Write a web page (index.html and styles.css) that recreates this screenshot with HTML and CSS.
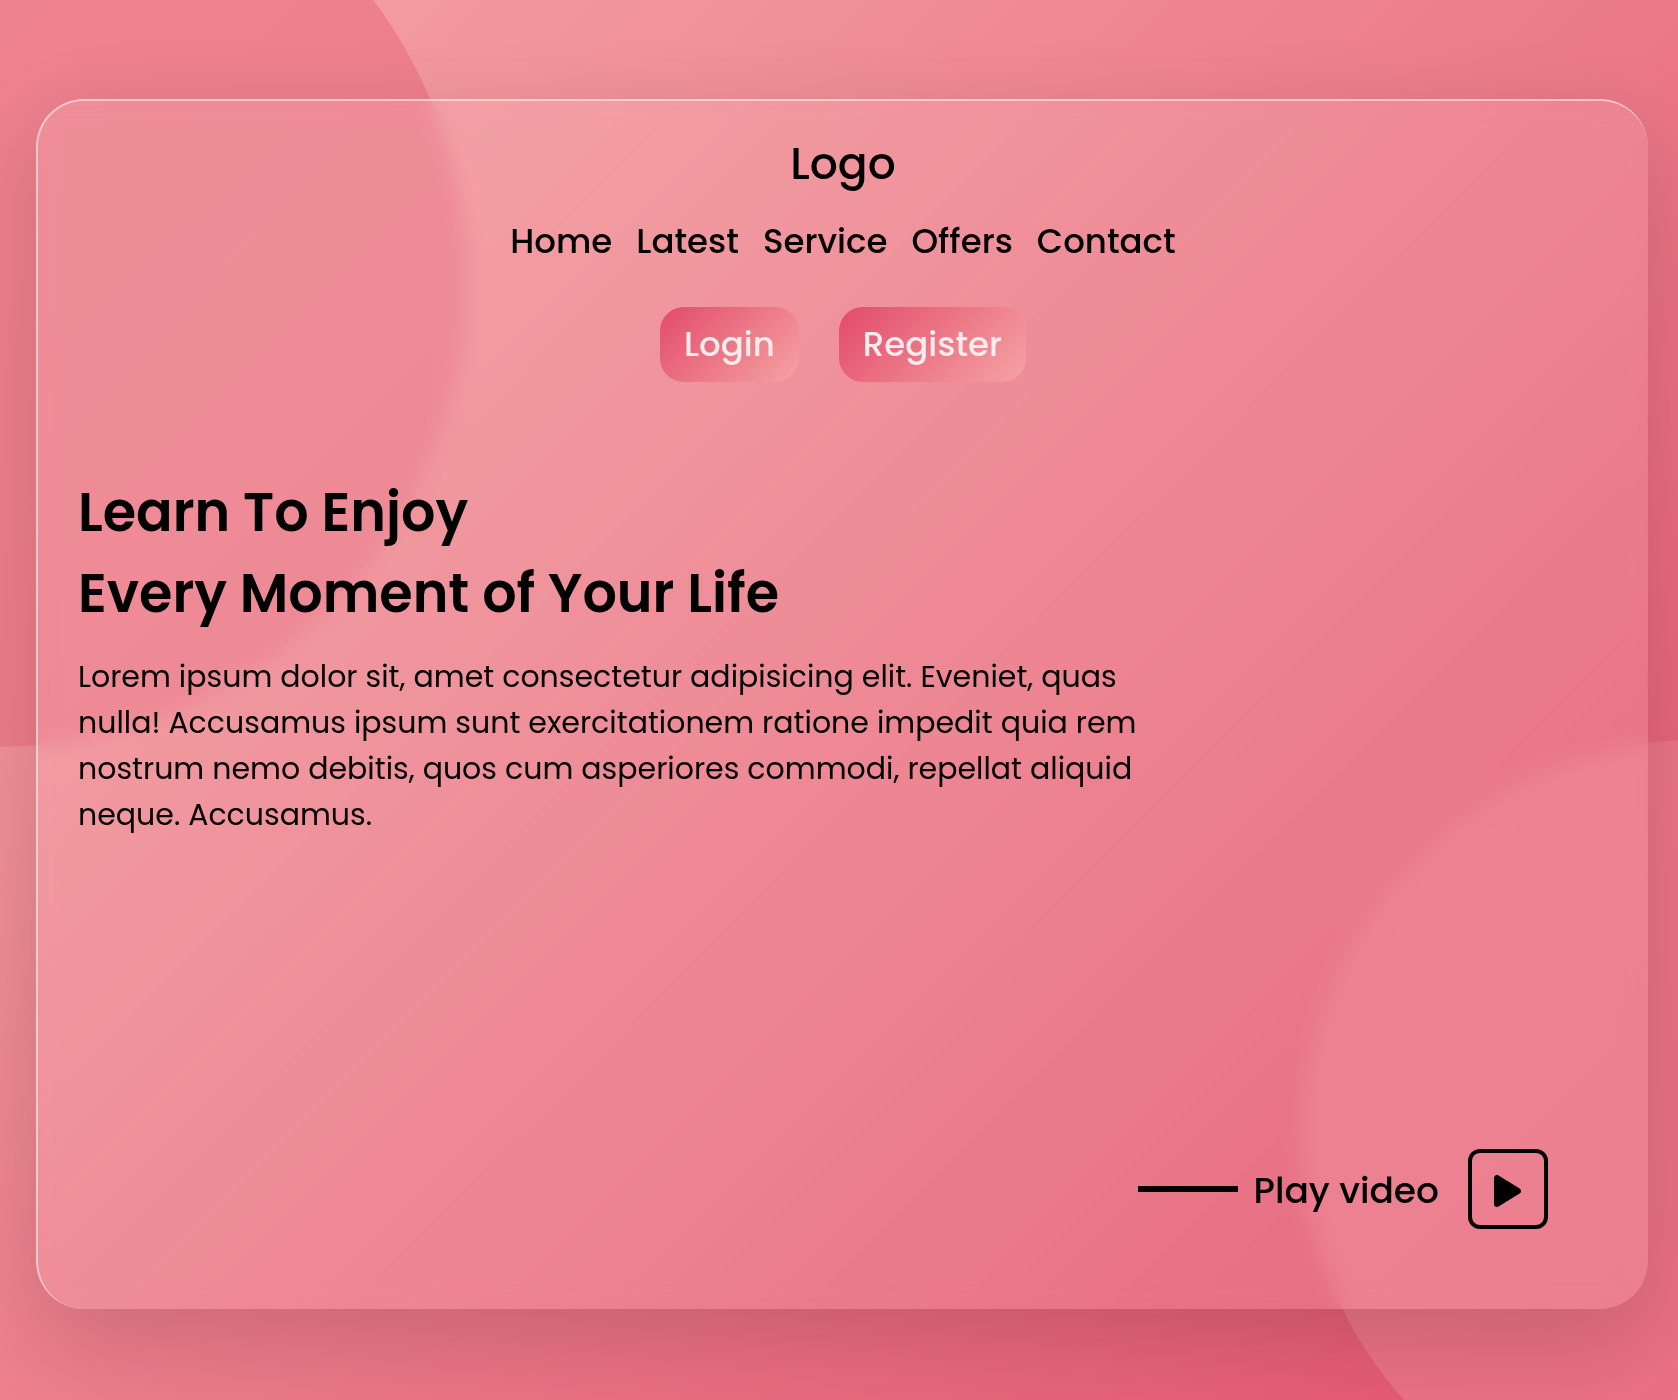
FILE: index.html
```html
<!DOCTYPE html>
<html lang="en">
<head>
  <meta charset="utf-8">
  <meta name="viewport" content="width=device-width, initial-scale=1">
  <title>Learn To Enjoy</title>
  <link rel="stylesheet" href="styles.css">
</head>
<body>
  <div class="card">
    <header class="header">
      <div class="logo">Logo</div>
      <nav class="nav">
        <a href="#home">Home</a>
        <a href="#latest">Latest</a>
        <a href="#service">Service</a>
        <a href="#offers">Offers</a>
        <a href="#contact">Contact</a>
      </nav>
      <div class="actions">
        <button class="btn" type="button">Login</button>
        <button class="btn" type="button">Register</button>
      </div>
    </header>
    <main class="intro">
      <h1>Learn To Enjoy<br>Every Moment of Your Life</h1>
      <p>Lorem ipsum dolor sit, amet consectetur adipisicing elit. Eveniet, quas nulla! Accusamus ipsum sunt exercitationem ratione impedit quia rem nostrum nemo debitis, quos cum asperiores commodi, repellat aliquid neque. Accusamus.</p>
    </main>
    <div class="video">
      <span class="video-line"></span>
      <span class="video-label" id="video-label">Play video</span>
      <button class="video-btn" type="button" aria-labelledby="video-label">
        <svg viewBox="0 0 30 36" width="30" height="36" aria-hidden="true">
          <path d="M4 7V33L25 20Z" fill="#000" stroke="#000" stroke-width="6" stroke-linejoin="round"/>
        </svg>
      </button>
    </div>
  </div>
</body>
</html>
```
FILE: styles.css
```css
* {
  box-sizing: border-box;
  margin: 0;
  padding: 0;
}

body {
  position: relative;
  min-height: 100vh;
  padding: 99px 30px 91px 36px;
  overflow: hidden;
  background: linear-gradient(135deg, #f5a5a5, #e3546e);
  color: #000;
  font-family: Poppins, Inter, "Liberation Sans", sans-serif;
}

/* The two large discs behind the card */
body::before,
body::after {
  content: "";
  position: absolute;
  inset: 0;
  z-index: -1;
  background: linear-gradient(135deg, #ee828d, #e97083);
}

body::before {
  clip-path: circle(30.2% at 0 20%);
}

body::after {
  clip-path: circle(25.6% at 101.2% 81.1%);
}

.card {
  display: flex;
  flex-direction: column;
  min-height: calc(100vh - 190px);
  padding: 29px 100px 80px 40px;
  border-top: 2px solid rgba(255, 255, 255, 0.5);
  border-left: 2px solid rgba(255, 255, 255, 0.5);
  border-radius: 48px;
  background: rgba(255, 255, 255, 0.1);
  box-shadow: 0 30px 90px rgba(0, 0, 0, 0.15);
  backdrop-filter: blur(10px);
}

.header {
  display: flex;
  flex-direction: column;
  align-items: center;
  margin-right: -60px;
}

.logo {
  font-size: 44px;
  font-weight: 500;
  line-height: 68px;
}

.nav {
  display: flex;
  gap: 24px;
  margin-top: 18px;
  font-size: 34px;
  font-weight: 500;
  line-height: 51px;
}

.nav a {
  color: inherit;
  text-decoration: none;
}

.actions {
  display: flex;
  gap: 40px;
  margin-top: 40px;
}

.btn {
  padding: 12px 24px;
  border: 0;
  border-radius: 24px;
  background: linear-gradient(135deg, #e34b69, #f5a3a3);
  color: #f9ecee;
  font: inherit;
  font-size: 34px;
  font-weight: 500;
  line-height: 51px;
}

.intro {
  max-width: 1080px;
  margin-top: 90px;
}

.intro h1 {
  font-size: 54px;
  font-weight: 600;
  line-height: 81px;
}

.intro p {
  margin-top: 20px;
  font-size: 30px;
  line-height: 46px;
}

.video {
  display: flex;
  align-items: center;
  justify-content: flex-end;
  margin-top: auto;
}

.video-line {
  width: 100px;
  height: 6px;
  background: #000;
}

.video-label {
  margin: 0 29px 0 16px;
  padding-top: 3px;
  font-size: 36px;
  font-weight: 500;
  line-height: 54px;
}

.video-btn {
  display: flex;
  align-items: center;
  justify-content: center;
  width: 80px;
  height: 80px;
  border: 4px solid #000;
  border-radius: 12px;
  background: none;
}
```
